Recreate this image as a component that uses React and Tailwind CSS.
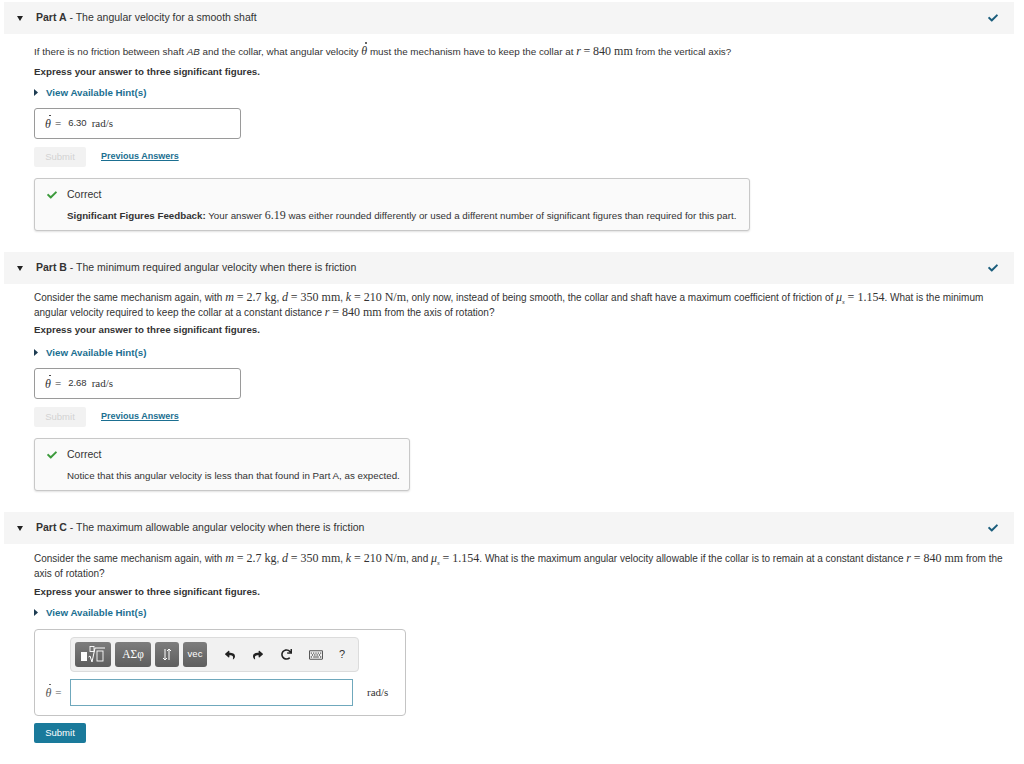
import React from 'react';
import { FaCheck, FaReply, FaShare, FaRedo, FaRegKeyboard } from 'react-icons/fa';

const serif = "font-['Liberation_Serif',serif]";

function V({ children }) {
  return <span className={`${serif} italic text-[12px]`}>{children}</span>;
}

function R({ children }) {
  return <span className={`${serif} text-[12px]`}>{children}</span>;
}

function ThetaDot() {
  return (
    <span className={`${serif} italic text-[12px] leading-none relative inline-block`}>
      θ
      <span className="absolute left-[4px] top-[-3px] w-[1.6px] h-[1.6px] rounded-full bg-current" />
    </span>
  );
}

function Sub({ children }) {
  return <span className={`${serif} italic text-[7px] relative top-[3px]`}>{children}</span>;
}

function Caret() {
  return (
    <svg width="6" height="5" viewBox="0 0 6 5">
      <polygon points="0,0 6,0 3,5" fill="#222" />
    </svg>
  );
}

function HintLink({ mt }) {
  return (
    <div className={`${mt} h-[13px] flex items-center gap-[8px] text-[9.75px] font-bold text-[#1b6f91] leading-[13px]`}>
      <svg width="4" height="7" viewBox="0 0 4 7">
        <polygon points="0,0 4,3.5 0,7" fill="#1d3c52" />
      </svg>
      View Available Hint(s)
    </div>
  );
}

function PartHeader({ part, title }) {
  return (
    <div className="ml-[4px] w-[1010px] h-[32px] bg-[#f5f5f5] flex items-center pl-[13px] pr-[16px] text-[10.5px] text-[#333]">
      <Caret />
      <span className="ml-[13px]">
        <span className="font-bold">{part}</span> - {title}
      </span>
      <FaCheck className="ml-auto text-[#1a5d7c] w-[10px] h-[10px]" />
    </div>
  );
}

function Express({ mt }) {
  return (
    <p className={`${mt} h-[13px] text-[9.75px] font-bold leading-[13px]`}>
      Express your answer to three significant figures.
    </p>
  );
}

function AnswerBox({ value }) {
  return (
    <div className="mt-[9px] w-[207px] h-[31px] border border-[#9a9a9a] rounded-[3px] flex items-center pl-[10px] text-[#333]">
      <ThetaDot />
      <span className={`${serif} text-[11px] ml-[4px]`}>=</span>
      <span className="ml-[7px] text-[9.5px]">{value}</span>
      <span className={`${serif} text-[11px] ml-[5px]`}>rad/s</span>
    </div>
  );
}

function SubmitRow() {
  return (
    <div className="mt-[8px] h-[20px] flex items-center">
      <div className="w-[52px] h-[20px] bg-[#f2f2f2] text-[#d3d3d3] text-[9.5px] flex items-center justify-center rounded-[2px]">
        Submit
      </div>
      <span className="ml-[15px] text-[9px] font-bold text-[#1b6f91] underline">Previous Answers</span>
    </div>
  );
}

function Feedback({ width, children }) {
  return (
    <div
      className={`${width} h-[53px] mt-[11px] border border-[#c8c8c8] rounded-[3px] bg-[#fafafa] shadow-[0_1px_2px_rgba(0,0,0,0.12)] pl-[12px] pr-[10px] pt-[9px] text-[#333]`}
    >
      <div className="flex items-center h-[13px]">
        <FaCheck className="text-[#3c9a3c] w-[10px] h-[10px]" />
        <span className="ml-[10px] text-[10.5px]">Correct</span>
      </div>
      <div className="ml-[20px] mt-[8px] h-[13px] text-[9.75px] leading-[13px] whitespace-nowrap">{children}</div>
    </div>
  );
}

function RootIcon() {
  return (
    <svg width="26" height="19" viewBox="0 0 26 19">
      <rect x="1" y="7" width="6" height="9" fill="#fff" />
      <rect x="10" y="1.5" width="4" height="5" fill="none" stroke="#fff" strokeWidth="0.9" />
      <polyline points="8.5,12 10,11 12,17 15,3 25,3" fill="none" stroke="#fff" strokeWidth="1" />
      <rect x="17" y="6" width="6" height="10" fill="none" stroke="#fff" strokeWidth="0.9" />
    </svg>
  );
}

function ArrowsIcon() {
  return (
    <svg width="10" height="13" viewBox="0 0 10 13" fill="none" stroke="#fff" strokeWidth="1">
      <line x1="3" y1="1" x2="3" y2="12" />
      <polyline points="1,10 3,12 5,10" />
      <line x1="7" y1="1" x2="7" y2="12" />
      <polyline points="5,3 7,1 9,3" />
    </svg>
  );
}

function ToolBtn({ w, children }) {
  return (
    <div
      className={`${w} h-[25px] rounded-[3px] bg-gradient-to-b from-[#7d7d7d] to-[#5e5e5e] text-white flex items-center justify-center`}
    >
      {children}
    </div>
  );
}

export default function App() {
  return (
    <div className="w-[1024px] h-[764px] bg-white font-['Liberation_Sans',Arial,sans-serif] text-[#333] pt-[2px] overflow-hidden">
      {/* Part A */}
      <PartHeader part="Part A" title="The angular velocity for a smooth shaft" />
      <div className="pl-[34px]">
        <p className="mt-[11px] h-[13px] text-[9.85px] leading-[13px] whitespace-nowrap">
          If there is no friction between shaft <i>AB</i> and the collar, what angular velocity <ThetaDot /> must the
          mechanism have to keep the collar at <V>r</V> <R>=</R> <R>840 mm</R> from the vertical axis?
        </p>
        <Express mt="mt-[7px]" />
        <HintLink mt="mt-[8px]" />
        <AnswerBox value="6.30" />
        <SubmitRow />
        <Feedback width="w-[716px]">
          <span className="font-bold">Significant Figures Feedback:</span> Your answer <R>6.19</R> was either rounded
          differently or used a different number of significant figures than required for this part.
        </Feedback>
      </div>

      {/* Part B */}
      <div className="mt-[21px]">
        <PartHeader part="Part B" title="The minimum required angular velocity when there is friction" />
      </div>
      <div className="pl-[34px]">
        <p className="mt-[7px] h-[26px] text-[10px] leading-[13px] whitespace-nowrap">
          Consider the same mechanism again, with <V>m</V> <R>= 2.7 kg</R>, <V>d</V> <R>= 350 mm</R>, <V>k</V>{' '}
          <R>= 210 N/m</R>, only now, instead of being smooth, the collar and shaft have a maximum coefficient of
          friction of <V>μ</V>
          <Sub>s</Sub> <R>= 1.154</R>. What is the minimum
          <br />
          angular velocity required to keep the collar at a constant distance <V>r</V> <R>= 840 mm</R> from the axis of
          rotation?
        </p>
        <Express mt="mt-[6px]" />
        <HintLink mt="mt-[10px]" />
        <AnswerBox value="2.68" />
        <SubmitRow />
        <Feedback width="w-[376px]">Notice that this angular velocity is less than that found in Part A, as expected.</Feedback>
      </div>

      {/* Part C */}
      <div className="mt-[21px]">
        <PartHeader part="Part C" title="The maximum allowable angular velocity when there is friction" />
      </div>
      <div className="pl-[34px]">
        <p className="mt-[7px] h-[28px] text-[10px] leading-[14px] whitespace-nowrap">
          Consider the same mechanism again, with <V>m</V> <R>= 2.7 kg</R>, <V>d</V> <R>= 350 mm</R>, <V>k</V>{' '}
          <R>= 210 N/m</R>, and <V>μ</V>
          <Sub>s</Sub> <R>= 1.154</R>. What is the maximum angular velocity allowable if the collar is to remain at a
          constant distance <V>r</V> <R>= 840 mm</R> from the
          <br />
          axis of rotation?
        </p>
        <Express mt="mt-[6px]" />
        <HintLink mt="mt-[8px]" />

        <div className="mt-[10px] w-[372px] h-[87px] border border-[#c4c4c4] rounded-[4px] pt-[7px]">
          <div className="ml-[35px] w-[289px] h-[35px] bg-[#f1f1f1] border border-[#dcdcdc] rounded-[4px] flex items-center pl-[4px] gap-[4px]">
            <ToolBtn w="w-[36px]">
              <RootIcon />
            </ToolBtn>
            <ToolBtn w="w-[36px]">
              <span className={`${serif} text-[11.5px]`}>ΑΣφ</span>
            </ToolBtn>
            <ToolBtn w="w-[24px]">
              <ArrowsIcon />
            </ToolBtn>
            <ToolBtn w="w-[24px]">
              <span className="text-[9.5px]">vec</span>
            </ToolBtn>
            <div className="flex items-center text-[#222]">
              <FaReply className="ml-[14px] w-[10px] h-[10px]" />
              <FaShare className="ml-[18px] w-[10px] h-[10px]" />
              <FaRedo className="ml-[18px] w-[11px] h-[11px]" />
              <FaRegKeyboard className="ml-[17px] w-[14px] h-[14px] text-[#555]" />
              <span className="ml-[16px] text-[11px] text-[#333]">?</span>
            </div>
          </div>
          <div className="mt-[7px] flex items-center">
            <div className="w-[35px] flex items-center justify-center pl-[2px] text-[#555]">
              <ThetaDot />
              <span className={`${serif} text-[11px] ml-[4px]`}>=</span>
            </div>
            <div className="w-[283px] h-[27px] border border-[#6fa8bc] bg-white" />
            <span className={`${serif} text-[11px] ml-[14px] text-[#333]`}>rad/s</span>
          </div>
        </div>

        <div className="mt-[7px] w-[52px] h-[20px] bg-[#1a7a9b] text-white text-[9.5px] rounded-[2px] flex items-center justify-center">
          Submit
        </div>
      </div>
    </div>
  );
}
